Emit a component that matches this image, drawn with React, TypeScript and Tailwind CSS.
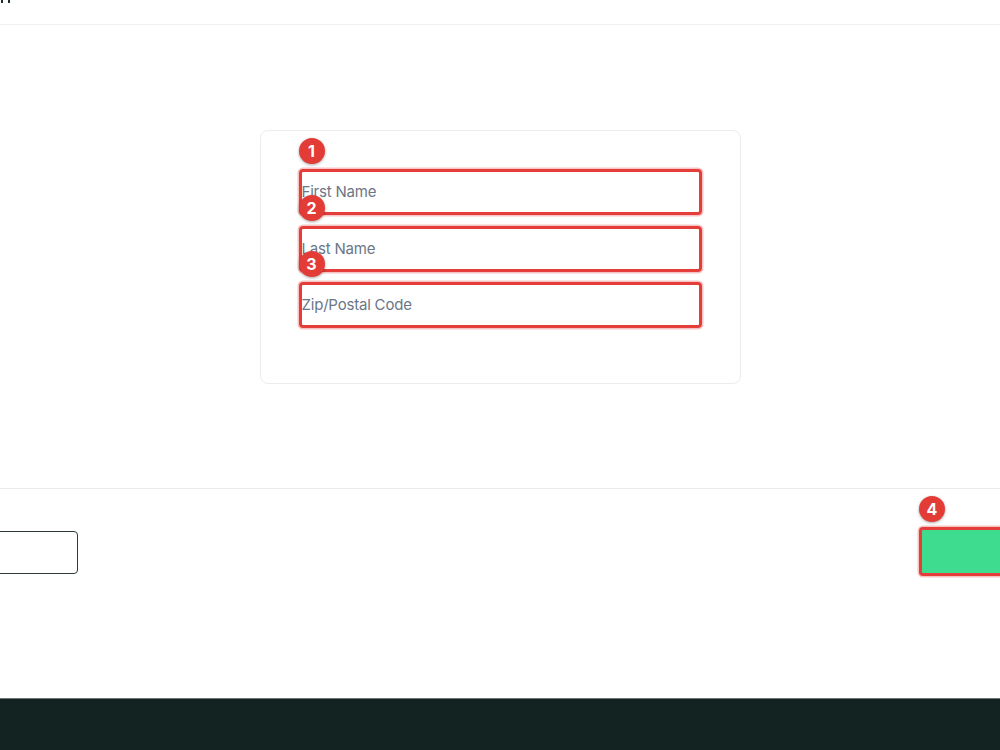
import React from "react";

function Badge({ n }: { n: number }) {
  return (
    <div className="absolute left-0 top-[-31px] flex h-[26px] w-[26px] items-center justify-center rounded-full bg-[#e33b36] text-[16px] font-bold leading-none text-white shadow-[0_1px_3px_rgba(0,0,0,0.35)]">
      {n}
    </div>
  );
}

function Field({ n, label }: { n: number; label: string }) {
  return (
    <div className="relative">
      <div className="flex h-[46px] items-center rounded-[4px] border-[3px] border-[#e53d3a] pt-px shadow-[0_0_0_1.5px_rgba(229,61,58,0.3)]">
        <span className="text-[15px] tracking-[-0.2px] text-[#6b7686]">{label}</span>
      </div>
      <Badge n={n} />
    </div>
  );
}

export default function App() {
  return (
    <div className="flex h-[750px] w-[1000px] flex-col overflow-hidden bg-white font-['Inter',sans-serif]">
      <header className="flex h-[25px] shrink-0 items-start gap-[5px] border-b border-[#efefef] pl-px">
        <div className="h-[3px] w-[2px] bg-[#20302f]" />
        <div className="h-[3px] w-[2px] bg-[#20302f]" />
      </header>
      <main className="flex flex-1 justify-center border-b border-[#ebebeb] pt-[105px]">
        <div className="h-[254px] w-[481px] rounded-[8px] border border-[#ececec] px-[38px] pt-[38px]">
          <div className="flex flex-col gap-[10.5px]">
            <Field n={1} label="First Name" />
            <Field n={2} label="Last Name" />
            <Field n={3} label="Zip/Postal Code" />
          </div>
        </div>
      </main>
      <div className="flex h-[209px] shrink-0 items-start justify-between pt-[42px]">
        <div className="ml-[-20px] h-[43px] w-[98px] rounded-[4px] border border-[#2e3b3a]" />
        <div className="relative mr-[-20px] mt-[-4px]">
          <div className="h-[49px] w-[101px] rounded-[4px] border-[3px] border-[#e53d3a] bg-[#3ddc8f] shadow-[0_0_0_1.5px_rgba(229,61,58,0.3)]" />
          <Badge n={4} />
        </div>
      </div>
      <footer className="h-[52px] shrink-0 border-t border-[#6b7574] bg-[#132321]" />
    </div>
  );
}
